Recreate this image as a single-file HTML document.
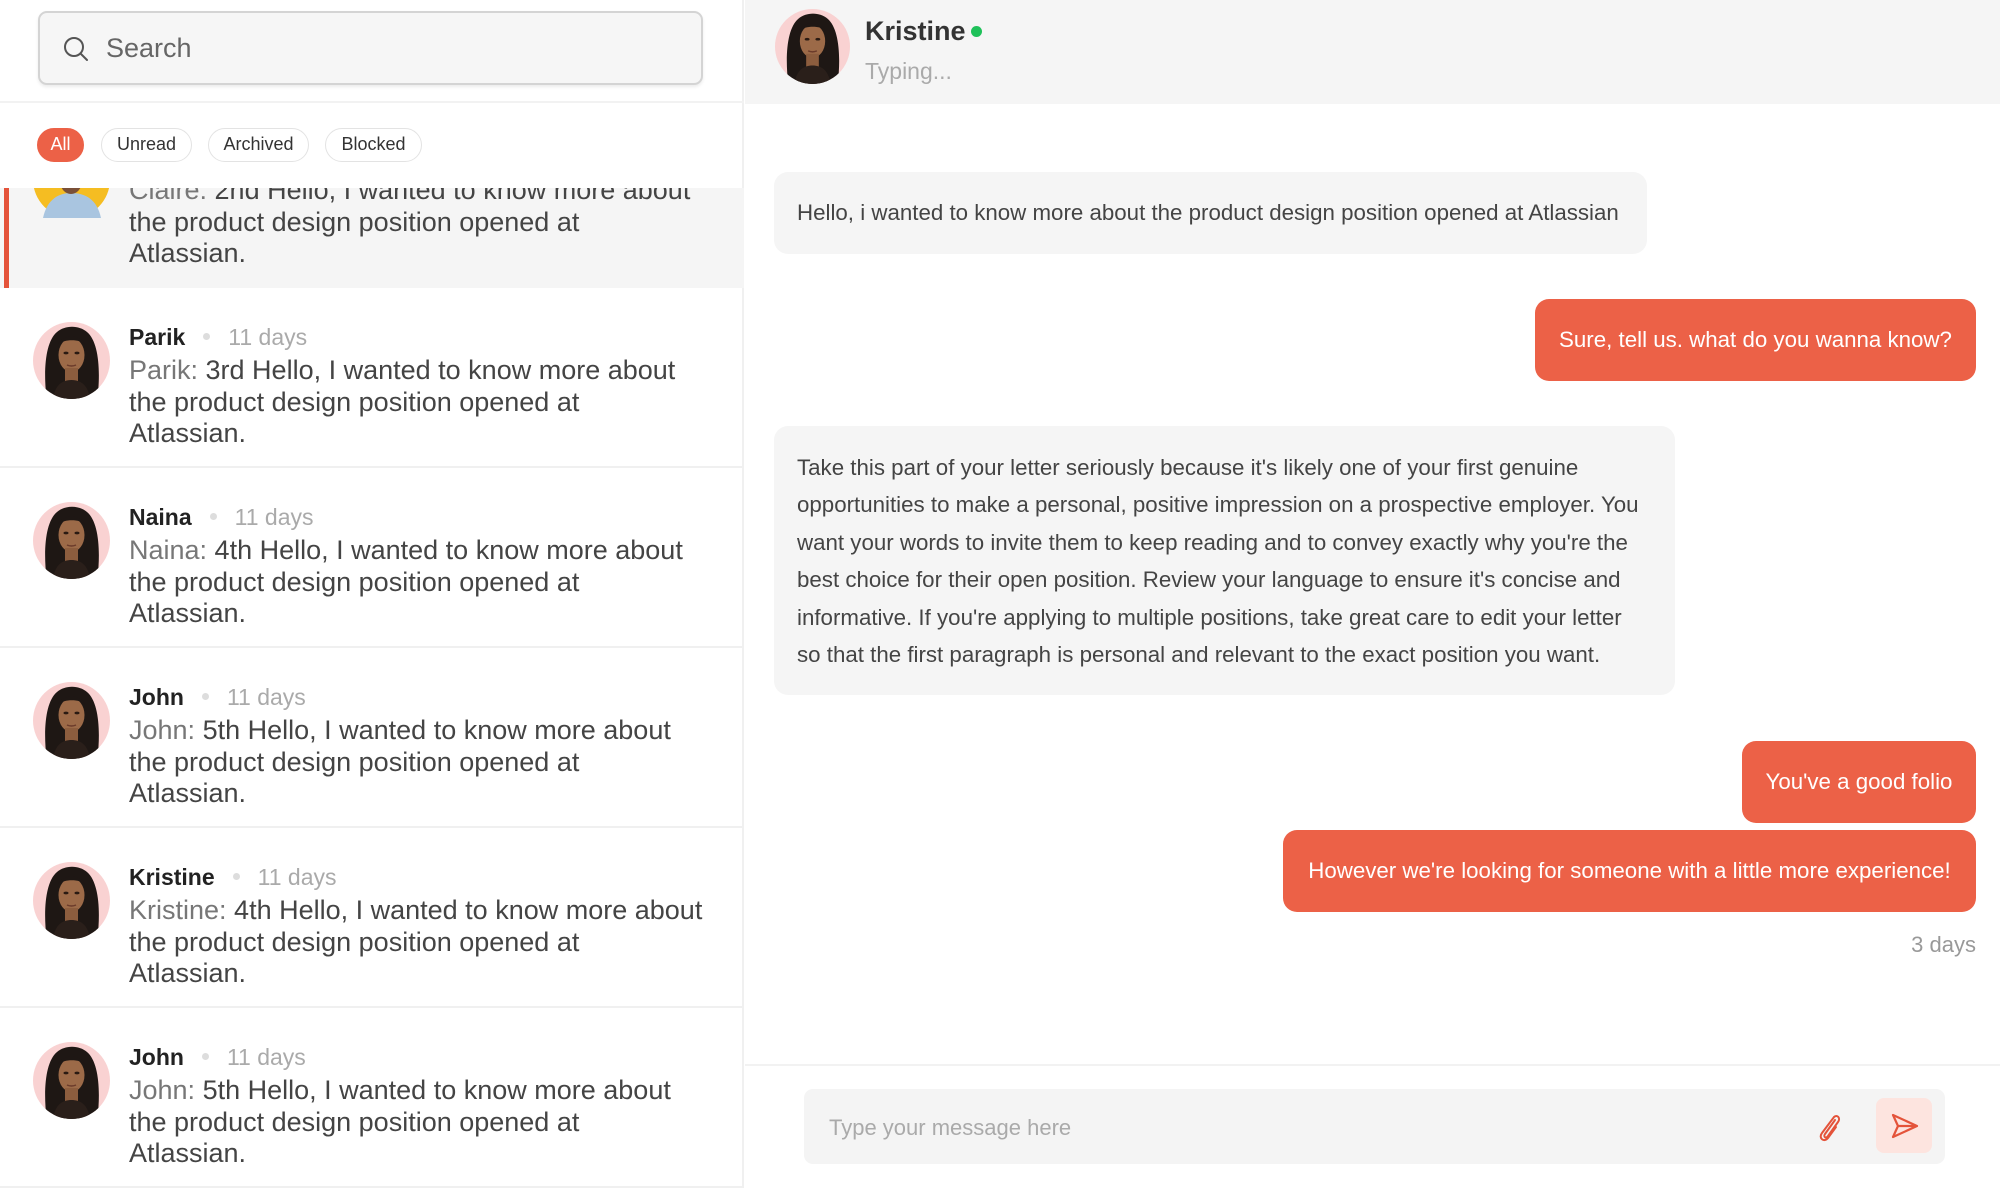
<!DOCTYPE html>
<html><head><meta charset="utf-8">
<style>
*{margin:0;padding:0;box-sizing:border-box}
body{width:2000px;height:1186px;overflow:hidden;background:#fff;font-family:"Liberation Sans",Arial,sans-serif;position:relative}
.abs{position:absolute}
.left{left:0;top:0;width:744px;height:1186px;border-right:2px solid #f0f0f0}
.search{left:38px;top:11px;width:665px;height:74px;border:2px solid #d4d4d4;border-radius:9px;background:#f6f6f6;box-shadow:0 2px 3px rgba(0,0,0,.08)}
.search span{position:absolute;left:66px;top:20px;font-size:27px;color:#666}
.chip{top:128px;height:34px;border:1.5px solid #e3e3e3;border-radius:17px;font-size:18px;line-height:31px;text-align:center;color:#333}
.item{left:0;width:744px;height:180px;border-bottom:2px solid #f0f0f0;overflow:hidden}
.av{position:absolute;left:33px;width:77px;height:77px}
.nm{position:absolute;left:129px;font-size:23px;font-weight:bold;color:#222}
.dy{color:#aaa;font-weight:normal;font-size:23px}
.dot{display:inline-block;width:7px;height:7px;border-radius:50%;background:#ddd;margin:0 18px 4px 18px;vertical-align:middle}
.msg{position:absolute;left:129px;font-size:27px;line-height:31.6px;color:#444;white-space:nowrap}
.msg i{font-style:normal;color:#777}
.bub{font-size:22.3px;color:#444;background:#f5f5f5;border-radius:14px}
.or{background:#ec6147;color:#fff;border-radius:14px;font-size:22.3px;text-align:center}
</style></head><body>
<svg width="0" height="0" style="position:absolute">
<defs>
<symbol id="face" viewBox="0 0 77 77">
<circle cx="38.5" cy="38.5" r="38.5" fill="#f9d2d2"/>
<clipPath id="cc"><circle cx="38.5" cy="38.5" r="38.5"/></clipPath>
<g clip-path="url(#cc)">
<path d="M14 80 C10 50 12 20 24 10 C32 3 46 3 54 10 C66 20 68 50 64 80 Z" fill="#1e1714"/>
<ellipse cx="38.5" cy="33" rx="13" ry="17" fill="#9c6a48"/>
<rect x="32" y="46" width="13" height="14" fill="#8c5d3e"/>
<path d="M20 77 C22 62 30 58 38.5 58 C47 58 55 62 57 77Z" fill="#2a1f1a"/>
<path d="M25 22 C30 12 47 12 52 22 C46 17 32 17 25 22Z" fill="#1e1714"/>
<ellipse cx="33" cy="31" rx="2.5" ry="1.4" fill="#2a1a12"/>
<ellipse cx="44" cy="31" rx="2.5" ry="1.4" fill="#2a1a12"/>
<path d="M34 43 Q38.5 45 43 43" stroke="#6a3a2a" stroke-width="1.5" fill="none"/>
</g>
</symbol>
</defs>
</svg>

<div class="abs left"></div>
<div class="abs" style="left:0;top:0;width:744px;height:103px;border-bottom:2px solid #f2f2f2"></div>
<div class="abs search">
<svg class="abs" style="left:22px;top:22px" width="28" height="28" viewBox="0 0 28 28"><circle cx="12" cy="12" r="9" stroke="#555" stroke-width="2" fill="none"/><path d="M19 19 L25 25" stroke="#555" stroke-width="2" stroke-linecap="round"/></svg>
<span>Search</span></div>

<div class="abs chip" style="left:37px;width:47px;background:#ec6147;border-color:#ec6147;color:#fff">All</div>
<div class="abs chip" style="left:101px;width:91px">Unread</div>
<div class="abs chip" style="left:208px;width:101px">Archived</div>
<div class="abs chip" style="left:325px;width:97px">Blocked</div>

<div class="abs item" style="top:188px;height:100px;background:#f5f5f5;border-bottom:none">
<div class="abs" style="left:4px;top:0;width:5px;height:100px;background:#e4533a"></div>
<svg class="abs" style="left:33px;top:-47px" width="77" height="77" viewBox="0 0 77 77"><circle cx="38.5" cy="38.5" r="38.5" fill="#f5bd22"/><path d="M10 77 C14 58 26 52 38 52 C52 52 64 58 68 77Z" fill="#a9c5e0"/><ellipse cx="38" cy="40" rx="11" ry="13" fill="#7a5038"/></svg>
<div class="msg" style="top:-13px"><i>Claire:</i> 2nd Hello, I wanted to know more about<br>the product design position opened at<br>Atlassian.</div>
</div>

<div class="abs item" style="top:288px">
<svg class="av" style="top:34px"><use href="#face"/></svg>
<div class="nm" style="top:36px">Parik<span class="dot"></span><span class="dy">11 days</span></div>
<div class="msg" style="top:67px"><i>Parik:</i> 3rd Hello, I wanted to know more about<br>the product design position opened at<br>Atlassian.</div></div>

<div class="abs item" style="top:468px">
<svg class="av" style="top:34px"><use href="#face"/></svg>
<div class="nm" style="top:36px">Naina<span class="dot"></span><span class="dy">11 days</span></div>
<div class="msg" style="top:67px"><i>Naina:</i> 4th Hello, I wanted to know more about<br>the product design position opened at<br>Atlassian.</div></div>

<div class="abs item" style="top:648px">
<svg class="av" style="top:34px"><use href="#face"/></svg>
<div class="nm" style="top:36px">John<span class="dot"></span><span class="dy">11 days</span></div>
<div class="msg" style="top:67px"><i>John:</i> 5th Hello, I wanted to know more about<br>the product design position opened at<br>Atlassian.</div></div>

<div class="abs item" style="top:828px">
<svg class="av" style="top:34px"><use href="#face"/></svg>
<div class="nm" style="top:36px">Kristine<span class="dot"></span><span class="dy">11 days</span></div>
<div class="msg" style="top:67px"><i>Kristine:</i> 4th Hello, I wanted to know more about<br>the product design position opened at<br>Atlassian.</div></div>

<div class="abs item" style="top:1008px">
<svg class="av" style="top:34px"><use href="#face"/></svg>
<div class="nm" style="top:36px">John<span class="dot"></span><span class="dy">11 days</span></div>
<div class="msg" style="top:67px"><i>John:</i> 5th Hello, I wanted to know more about<br>the product design position opened at<br>Atlassian.</div></div>

<div class="abs" style="left:745px;top:0;width:1255px;height:104px;background:#f5f5f5"></div>
<svg class="abs" style="left:775px;top:9px" width="75" height="75" viewBox="0 0 77 77"><use href="#face"/></svg>
<div class="abs" style="left:865px;top:16px;font-size:27px;font-weight:bold;color:#333">Kristine</div>
<div class="abs" style="left:971px;top:26px;width:11px;height:11px;border-radius:50%;background:#1fc15a"></div>
<div class="abs" style="left:865px;top:58px;font-size:23px;color:#aaa">Typing...</div>

<div class="abs bub" style="left:774px;top:172px;width:873px;height:82px;padding:28px 0 0 23px;white-space:nowrap">Hello, i wanted to know more about the product design position opened at Atlassian</div>
<div class="abs or" style="left:1535px;top:299px;width:441px;height:82px;line-height:82px">Sure, tell us. what do you wanna know?</div>
<div class="abs bub" style="left:774px;top:426px;width:901px;height:269px;padding:23px 23px 0 23px;line-height:37.4px;white-space:nowrap">Take this part of your letter seriously because it's likely one of your first genuine<br>opportunities to make a personal, positive impression on a prospective employer. You<br>want your words to invite them to keep reading and to convey exactly why you're the<br>best choice for their open position. Review your language to ensure it's concise and<br>informative. If you're applying to multiple positions, take great care to edit your letter<br>so that the first paragraph is personal and relevant to the exact position you want.</div>
<div class="abs or" style="left:1742px;top:741px;width:234px;height:82px;line-height:82px">You've a good folio</div>
<div class="abs or" style="left:1283px;top:830px;width:693px;height:82px;line-height:82px">However we're looking for someone with a little more experience!</div>
<div class="abs" style="right:24px;top:932px;font-size:22px;color:#999">3 days</div>

<div class="abs" style="left:745px;top:1064px;width:1255px;height:2px;background:#f2f2f2"></div>
<div class="abs" style="left:804px;top:1089px;width:1141px;height:75px;background:#f4f4f4;border-radius:9px"></div>
<div class="abs" style="left:829px;top:1115px;font-size:22px;color:#aaa">Type your message here</div>
<svg class="abs" style="left:1814px;top:1110px" width="30" height="34" viewBox="0 0 30 34"><path d="M21 10 L11 24 C9 27 12 29 14 26 L24 12 C27 8 23 4 20 7 L8 23 C4 28 10 33 14 28 L22 17" stroke="#e4533a" stroke-width="2" fill="none" stroke-linecap="round"/></svg>
<div class="abs" style="left:1876px;top:1098px;width:56px;height:55px;background:#fde4df;border-radius:8px"></div>
<svg class="abs" style="left:1890px;top:1112px" width="30" height="28" viewBox="0 0 30 28"><path d="M3 3 L27 14 L3 25 L8 14 Z M8 14 L27 14" stroke="#e4533a" stroke-width="2.2" fill="none" stroke-linejoin="round"/></svg>
</body></html>
